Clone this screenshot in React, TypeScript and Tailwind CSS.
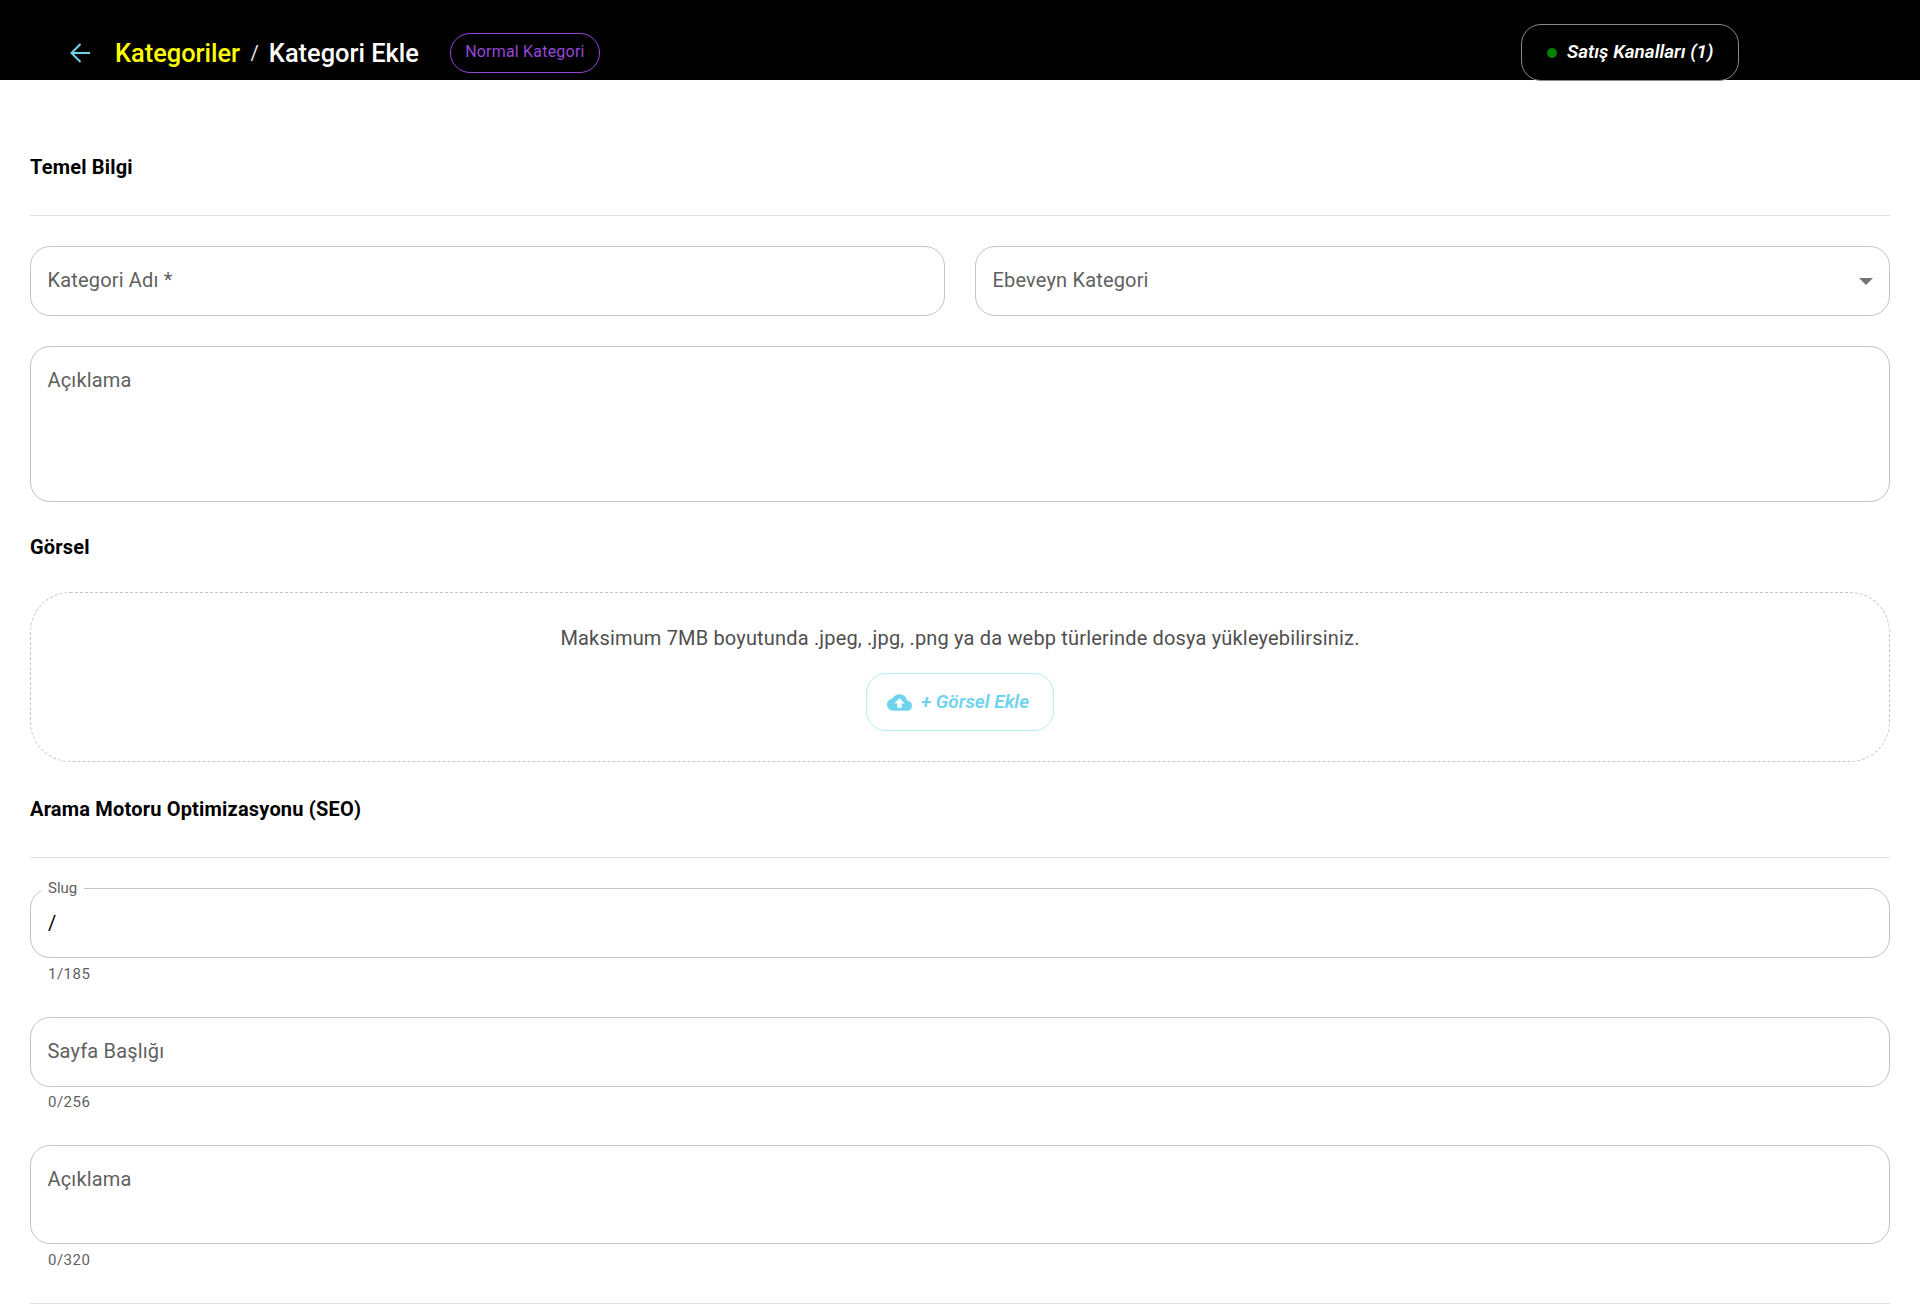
import React from "react";

const font = "font-['Roboto',sans-serif]";

function Field({ label, height = "h-[70px]", top = false }: { label: string; height?: string; top?: boolean }) {
  return (
    <div className={`${height} border border-[#c4c4c4] rounded-[20px] px-[16.5px] flex ${top ? "items-start pt-[18px]" : "items-center pb-[2px]"} text-[20px] leading-[30px] tracking-[0.17px] text-[#5f5f5f]`}>
      {label}
    </div>
  );
}

function Counter({ children, className = "mt-[6px]" }: { children: React.ReactNode; className?: string }) {
  return <div className={`pl-[18px] ${className} h-[20px] text-[15px] leading-[20px] tracking-[0.5px] text-[#5f5f5f]`}>{children}</div>;
}

function Title({ children, className = "" }: { children: React.ReactNode; className?: string }) {
  return <h2 className={`text-[20px] leading-[30px] font-bold tracking-[0.19px] text-black ${className}`}>{children}</h2>;
}

export default function App() {
  return (
    <div className={`${font} bg-white min-h-[1304px] overflow-hidden`}>
      <header className="h-20 bg-black flex items-start justify-between pl-[70px] pr-[181px]">
        <div className="flex items-center h-[40px] mt-[33px]">
          <svg className="w-[20px] h-[20px]" viewBox="0 0 20 20" fill="none" stroke="#6fd3ee" strokeWidth="2">
            <path d="M20 10H1.5M10.5 1 1.5 10l9 9" />
          </svg>
          <span className="ml-[25px] text-[25.4px] font-medium text-[#ffff00]">Kategoriler</span>
          <span className="ml-[10.5px] text-[20px] text-[#e6e6e6]">/</span>
          <span className="ml-[10px] text-[25.4px] font-medium text-white">Kategori Ekle</span>
          <span className="ml-[31px] h-[40px] w-[150px] rounded-[20px] border border-[#9448d8] text-[#9448d8] text-[16px] tracking-[0.2px] flex items-center justify-center pb-[2px]">
            Normal Kategori
          </span>
        </div>
        <div className="mt-[24px] h-[57px] w-[218px] rounded-[20px] border border-[#8a8a8a] flex items-center pl-[25px]">
          <span className="w-[10px] h-[10px] rounded-full bg-[#008000]" />
          <span className="ml-[10px] mb-[1px] text-[18.9px] font-semibold italic text-white">Satış Kanalları (1)</span>
        </div>
      </header>

      <main className="px-[30px] pt-[72px]">
        <Title className="mb-[33px]">Temel Bilgi</Title>
        <div className="h-px bg-[#e0e0e0]" />
        <div className="grid grid-cols-2 gap-[30px] mt-[30px]">
          <Field label="Kategori Adı *" />
          <div className="relative">
            <Field label="Ebeveyn Kategori" />
            <svg className="absolute right-[17px] top-[32px] w-[14px] h-[7px]" viewBox="0 0 14 7" fill="#757575">
              <path d="M0 0h14L7 7z" />
            </svg>
          </div>
        </div>
        <div className="mt-[30px]">
          <Field label="Açıklama" height="h-[156px]" top />
        </div>

        <Title className="mt-[30px]">Görsel</Title>
        <div className="mt-[30px] h-[170px] rounded-[40px] border border-dashed border-[#c4c4c4] flex flex-col items-center pt-[30px]">
          <p className="text-[20px] leading-[30px] tracking-[0.17px] text-[#4f4f4f]">
            Maksimum 7MB boyutunda .jpeg, .jpg, .png ya da webp türlerinde dosya yükleyebilirsiniz.
          </p>
          <div className="mt-[20px] h-[58px] w-[188px] rounded-[20px] border border-[#b5ecf8] flex items-center justify-center gap-[9px] pr-[4px]">
            <svg className="w-[25px] h-[25px]" viewBox="0 0 24 24" fill="#6fd3ee">
              <path d="M19.35 10.04C18.67 6.59 15.64 4 12 4 9.11 4 6.6 5.64 5.35 8.04 2.34 8.36 0 10.91 0 14c0 3.31 2.69 6 6 6h13c2.76 0 5-2.24 5-5 0-2.64-2.05-4.78-4.65-4.96zM14 13v4h-4v-4H7l5-5 5 5h-3z" />
            </svg>
            <span className="text-[19px] font-semibold italic text-[#6fd3ee]">+ Görsel Ekle</span>
          </div>
        </div>

        <Title className="mt-[32px] mb-[33px]">Arama Motoru Optimizasyonu (SEO)</Title>
        <div className="h-px bg-[#e0e0e0]" />

        <div className="mt-[30px] relative">
          <div className="h-[70px] border border-[#c4c4c4] rounded-[20px] px-[17px] flex items-center text-[20px] text-black">/</div>
          <span className="absolute left-[11px] top-[-10px] px-[7px] bg-white text-[15px] leading-[20px] text-[#5f5f5f]">Slug</span>
        </div>
        <Counter>1/185</Counter>
        <div className="mt-[33px]">
          <Field label="Sayfa Başlığı" />
        </div>
        <Counter className="mt-[5px]">0/256</Counter>
        <div className="mt-[33px]">
          <Field label="Açıklama" height="h-[99px]" top />
        </div>
        <Counter>0/320</Counter>
        <div className="mt-[33px] h-px bg-[#e0e0e0]" />
      </main>
    </div>
  );
}
